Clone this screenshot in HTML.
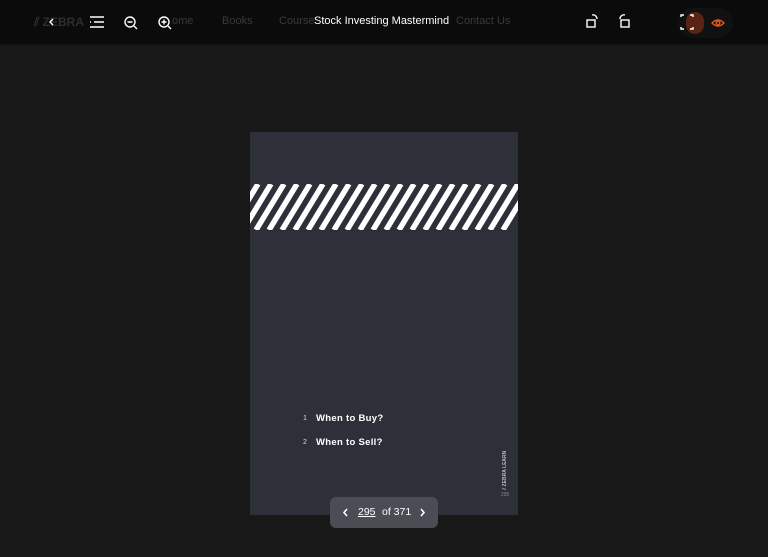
<!DOCTYPE html>
<html><head><meta charset="utf-8"><style>
html,body{margin:0;padding:0;width:768px;height:557px;background:#181818;overflow:hidden;font-family:"Liberation Sans",sans-serif}
.top{position:absolute;left:0;top:0;width:768px;height:44px;background:#0b0b0b;border-bottom:1px solid #141414}
.t{position:absolute;top:15px;font-size:11px;color:#3a3a3a}
.page{position:absolute;left:250px;top:132px;width:268px;height:383px;background:#2e3039}
.w{color:#fff;font-weight:bold;font-size:9.5px;position:absolute;letter-spacing:0.3px}
.n{color:#ddd;font-size:7px;position:absolute}
.pager{position:absolute;left:330px;top:497px;width:108px;height:31px;background:#4a4d54;border-radius:6px;color:#fff;font-size:10.5px}
</style></head><body>
<div class="top">
 <div class="t" style="left:34px;font-weight:bold;color:#2e2e2e;font-size:12px">⫽ ZEBRA</div>
 <div class="t" style="left:172px">ome</div>
 <div class="t" style="left:222px">Books</div>
 <div class="t" style="left:279px">Course</div>
 <div class="t" style="left:456px">Contact Us</div>
 <div style="position:absolute;left:314px;top:15px;font-size:11px;color:#fff">Stock Investing Mastermind</div>
 <div style="position:absolute;left:678px;top:8px;width:55px;height:30px;border-radius:15px;background:#111"></div>
 <div style="position:absolute;left:686px;top:12px;width:18px;height:22px;border-radius:9px;background:#5a2414"></div>
 <svg width="768" height="44" style="position:absolute;left:0;top:0" fill="none" stroke="#fff" stroke-width="1.4">
  <path d="M53 19l-3 3 3 3"/>
  <path d="M90 17h14M94 22h10M90 27h14M90 22h1"/>
  <circle cx="130" cy="22" r="5"/><path d="M127.5 22h5M134 26l3 3"/>
  <circle cx="164" cy="22" r="5"/><path d="M161.5 22h5M164 19.5v5M168 26l3 3"/>
  <rect x="587" y="20" width="8" height="7"/><path d="M592 15a4 4 0 0 1 5 4"/>
  <rect x="621" y="20" width="8" height="7"/><path d="M625 15a4 4 0 0 0 -5 4"/>
  <path d="M681 17v-2h3M690 15h3v2M693 27v2h-3M684 29h-3v-2"/>
  <path d="M712 23q6-6 12 0q-6 6-12 0z" stroke="#e25a1c"/><circle cx="718" cy="23" r="1.8" stroke="#e25a1c"/>
 </svg>
</div>
<div class="page">
 <svg width="268" height="383" style="position:absolute;left:0;top:0">
  <defs><clipPath id="c"><rect x="0" y="52" width="268" height="46"/></clipPath></defs>
  <g clip-path="url(#c)" stroke="#fff" stroke-width="5.5">
   <path d="M-20 98l28-46M-7 98l28-46M6 98l28-46M19 98l28-46M32 98l28-46M45 98l28-46M58 98l28-46M71 98l28-46M84 98l28-46M97 98l28-46M110 98l28-46M123 98l28-46M136 98l28-46M149 98l28-46M162 98l28-46M175 98l28-46M188 98l28-46M201 98l28-46M214 98l28-46M227 98l28-46M240 98l28-46M253 98l28-46"/>
  </g>
 </svg>
 <div class="n" style="left:53px;top:283px">1</div><div class="w" style="left:66px;top:281px">When to Buy?</div>
 <div class="n" style="left:53px;top:307px">2</div><div class="w" style="left:66px;top:305px">When to Sell?</div>
 <div style="position:absolute;left:230px;top:330px;width:50px;transform:rotate(-90deg);font-size:5px;color:#bbb;font-weight:bold">⫽ ZEBRA LEARN</div>
 <div style="position:absolute;left:251px;top:360px;font-size:5px;color:#888">295</div>
</div>
<div class="pager">
 <svg width="108" height="31" style="position:absolute;left:0;top:0" fill="none" stroke="#fff" stroke-width="1.6"><path d="M17 12l-3 3.5 3 3.5M91 12l3 3.5-3 3.5"/></svg>
 <span style="position:absolute;left:28px;top:9px;text-decoration:underline">295</span>
 <span style="position:absolute;left:52px;top:9px">of 371</span>
</div>
</body></html>
